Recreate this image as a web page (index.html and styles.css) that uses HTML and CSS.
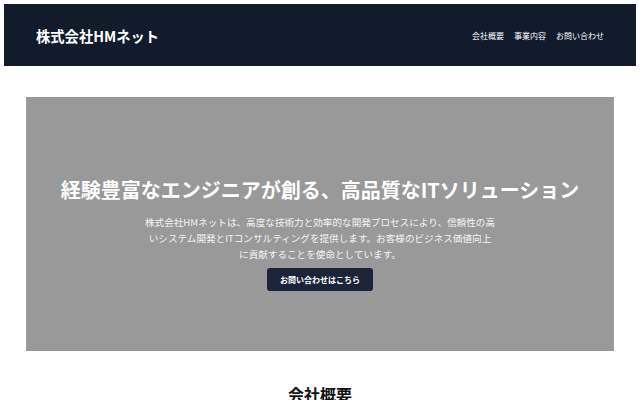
FILE: index.html
```html
<!DOCTYPE html>
<html lang="ja">
<head>
<meta charset="utf-8">
<title>株式会社HMネット</title>
<link rel="stylesheet" href="styles.css">
</head>
<body>
<header class="site-header">
  <div class="logo">株式会社HMネット</div>
  <nav class="nav">
    <a href="#about">会社概要</a>
    <a href="#services">事業内容</a>
    <a href="#contact">お問い合わせ</a>
  </nav>
</header>
<main class="main">
  <section class="hero">
    <h1 class="hero-title">経験豊富なエンジニアが創る、高品質なITソリューション</h1>
    <p class="hero-text">株式会社HMネットは、高度な技術力と効率的な開発プロセスにより、信頼性の高いシステム開発とITコンサルティングを提供します。お客様のビジネス価値向上に貢献することを使命としています。</p>
    <a class="hero-button" href="#contact">お問い合わせはこちら</a>
  </section>
  <section class="about" id="about">
    <h2 class="section-title">会社概要</h2>
  </section>
</main>
</body>
</html>
```
FILE: styles.css
```css
* { box-sizing: border-box; }
html, body { margin: 0; padding: 0; }
body {
  padding: 4px;
  font-family: "Noto Sans CJK JP", "Noto Sans", sans-serif;
  background: #ffffff;
  color: #111111;
}
.site-header {
  height: 62px;
  background: #111b2c;
  display: flex;
  align-items: center;
  justify-content: space-between;
  padding: 0 32px;
}
.logo {
  color: #ffffff;
  font-weight: 700;
  font-size: 14.3px;
}
.nav {
  display: flex;
  gap: 10px;
}
.nav a {
  color: #ffffff;
  text-decoration: none;
  font-size: 8px;
}
.main {
  padding: 31px 22px 0;
}
.hero {
  background: #999999;
  height: 254px;
  padding-top: 78px;
  display: flex;
  flex-direction: column;
  align-items: center;
  text-align: center;
}
.hero-title {
  margin: 0;
  color: #ffffff;
  font-size: 20px;
  font-weight: 700;
  line-height: 30px;
}
.hero-text {
  margin: 9px 0 0;
  max-width: 352px;
  color: #f4f4f4;
  font-size: 9.6px;
  line-height: 16px;
}
.hero-button {
  margin-top: 6px;
  background: #1b2438;
  color: #ffffff;
  text-decoration: none;
  font-size: 8px;
  font-weight: 700;
  padding: 0 13px;
  height: 23px;
  line-height: 23px;
  border-radius: 3px;
}
.about {
  padding-top: 31px;
  text-align: center;
}
.section-title {
  margin: 0;
  font-size: 16px;
  font-weight: 700;
  line-height: 24px;
  color: #111111;
}
```
